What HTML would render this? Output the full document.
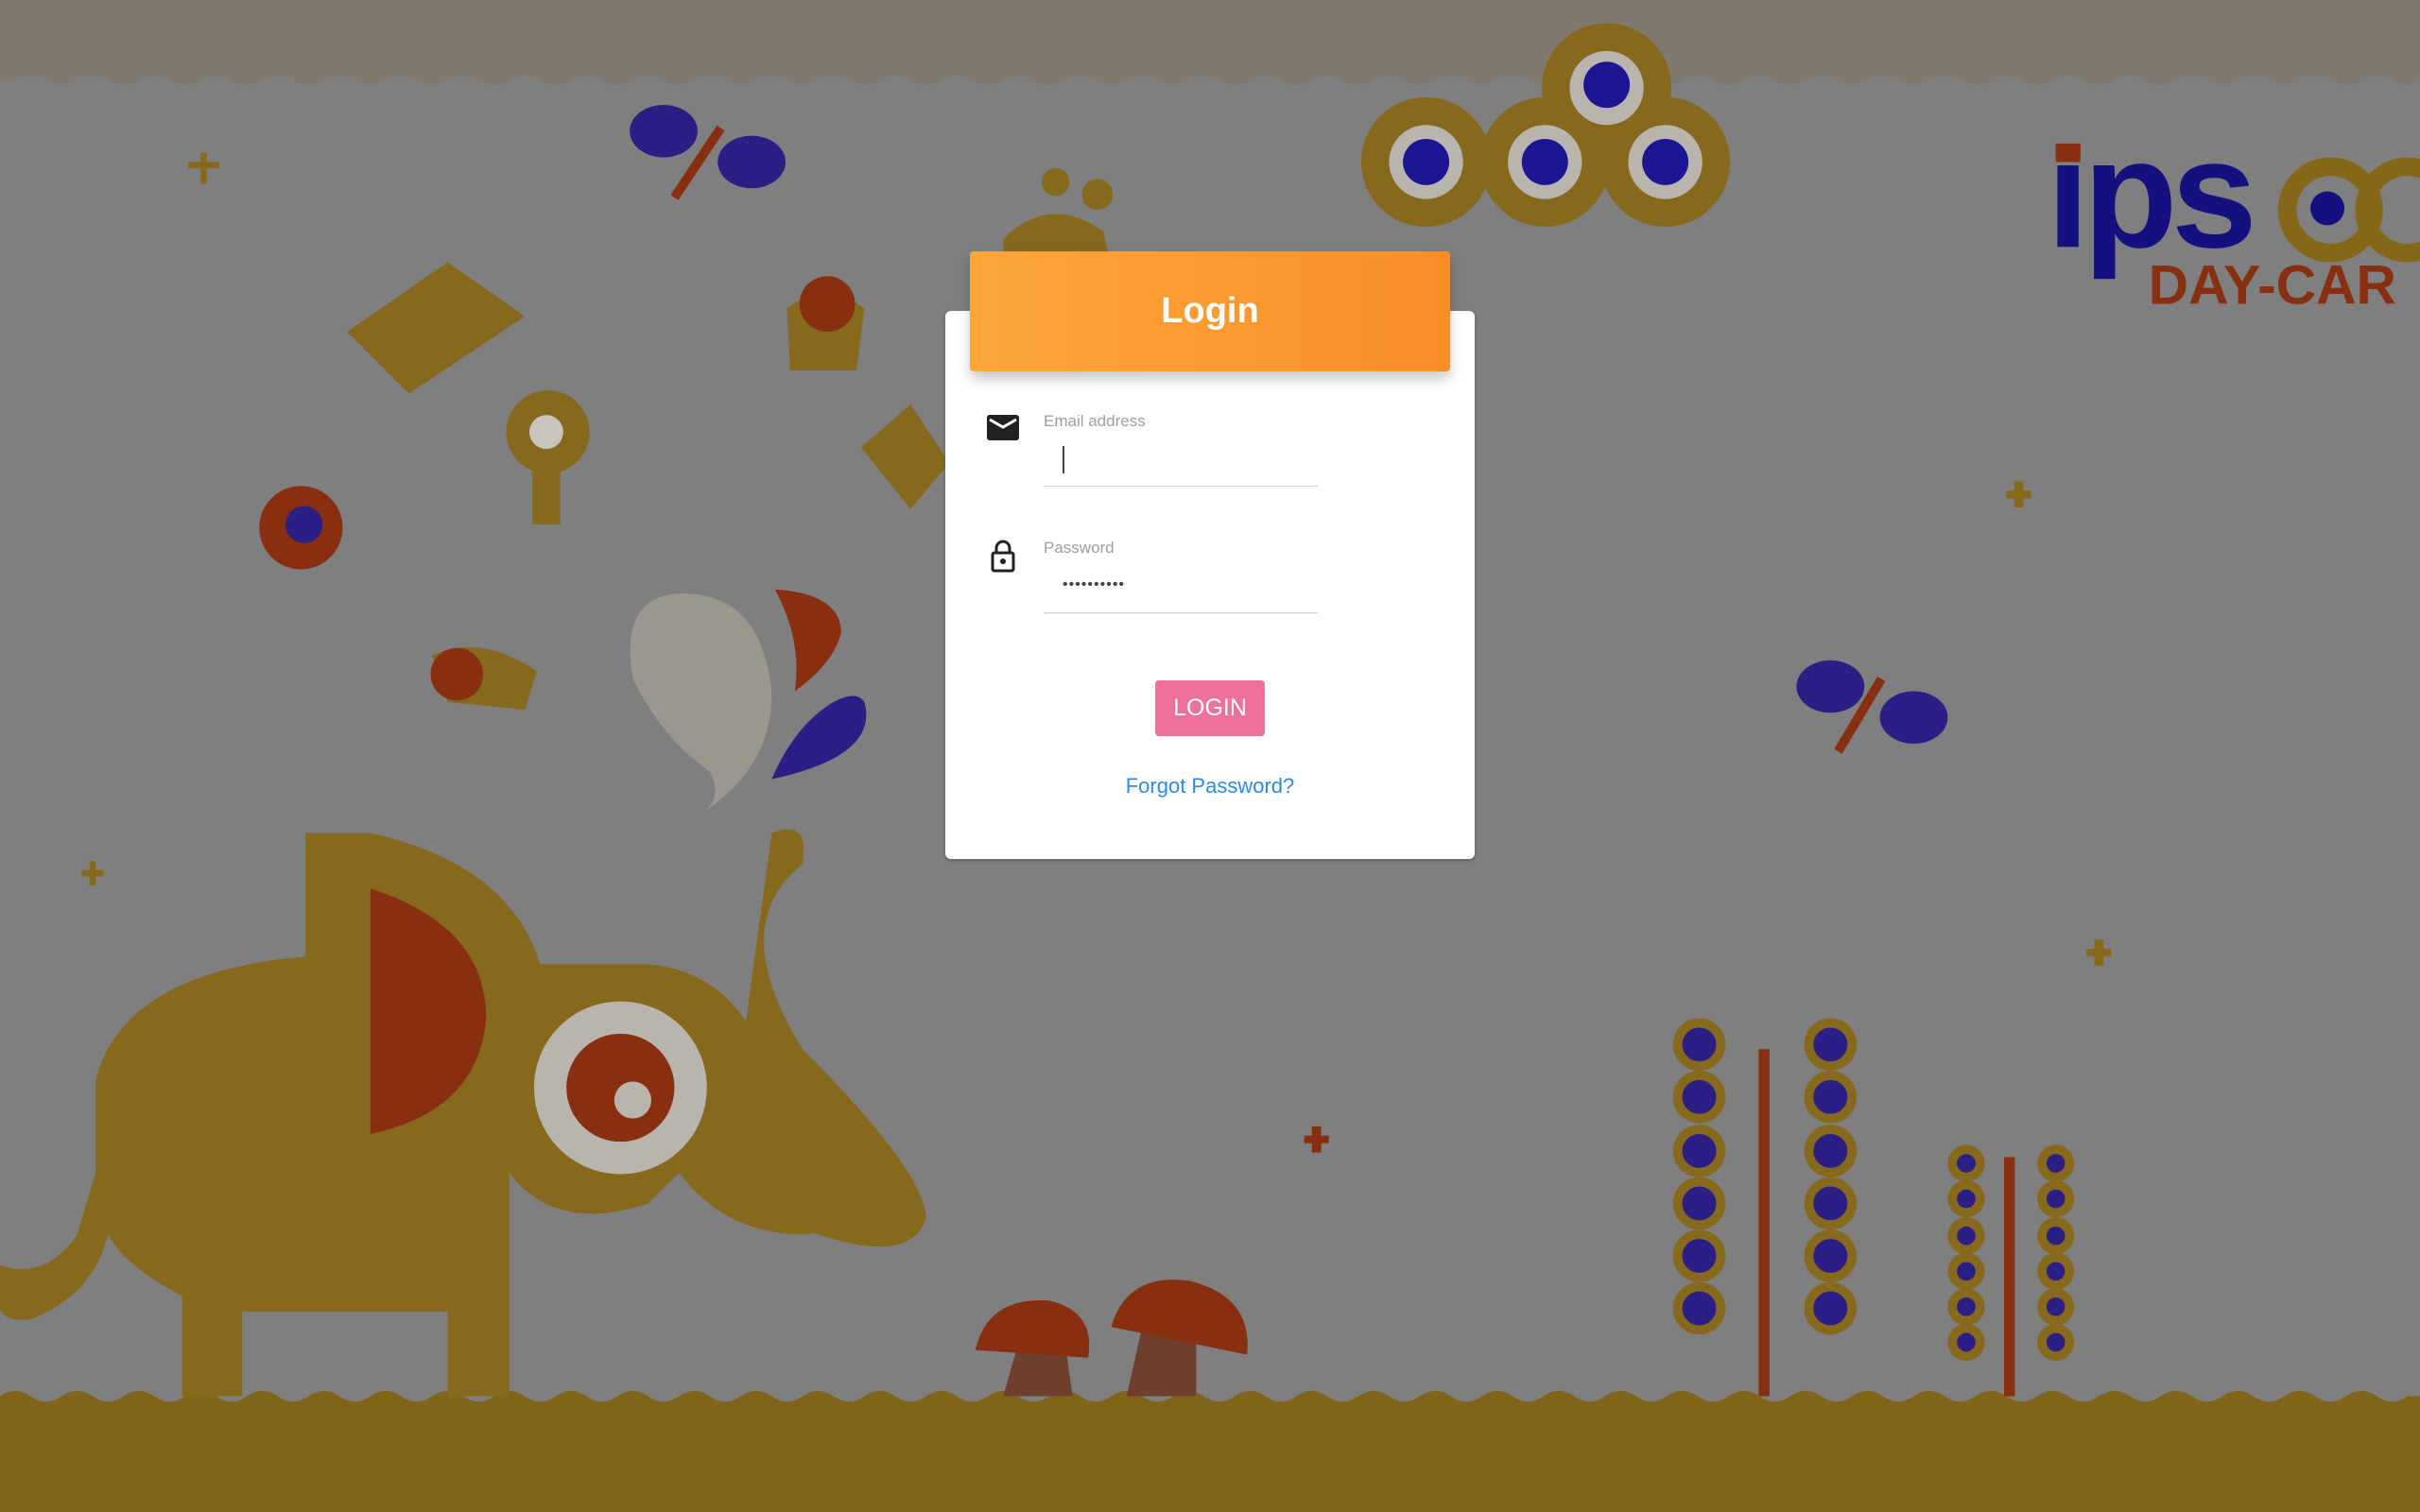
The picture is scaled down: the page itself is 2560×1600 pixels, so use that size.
<!DOCTYPE html>
<html><head><meta charset="utf-8"><style>
html,body{margin:0;padding:0;width:2560px;height:1600px;overflow:hidden;background:#7f7f7f;font-family:"Liberation Sans",sans-serif}
svg.bg{position:absolute;left:0;top:0;width:2560px;height:1600px}
.card{position:absolute;left:1000px;top:329px;width:560px;height:580px;background:#fff;border-radius:6px;box-shadow:0 2px 4px rgba(0,0,0,.25)}
.head{position:absolute;left:1026px;top:266px;width:508px;height:127px;border-radius:4px;background:linear-gradient(90deg,#fda63a,#f98e28);box-shadow:0 8px 14px rgba(0,0,0,.22);color:#fff;font-weight:bold;font-size:38px;text-align:center;line-height:127px}
.lbl{position:absolute;left:1104px;font-size:17px;color:#9e9e9e;line-height:20px}
.line{position:absolute;left:1104px;width:290px;height:1px;background:#cfcfcf}
.btn{position:absolute;left:1222px;top:720px;width:116px;height:59px;background:#ee7199;border-radius:4px;color:#fff;font-size:25px;text-align:center;line-height:59px}
.fp{position:absolute;left:1000px;width:560px;top:818px;line-height:28px;text-align:center;font-size:22px;color:#2a8ae6}
</style></head><body>
<svg class="bg" viewBox="0 0 1568 980" preserveAspectRatio="none">
<rect width="1568" height="980" fill="#7f7f7f"/>
<path d="M0 0H1568V52Q1560 58 1550 52T1530 52T1510 52T1490 52T1470 52T1450 52T1430 52T1410 52T1390 52T1370 52T1350 52T1330 52T1310 52T1290 52T1270 52T1250 52T1230 52T1210 52T1190 52T1170 52T1150 52T1130 52T1110 52T1090 52T1070 52T1050 52T1030 52T1010 52T990 52T970 52T950 52T930 52T910 52T890 52T870 52T850 52T830 52T810 52T790 52T770 52T750 52T730 52T710 52T690 52T670 52T650 52T630 52T610 52T590 52T570 52T550 52T530 52T510 52T490 52T470 52T450 52T430 52T410 52T390 52T370 52T350 52T330 52T310 52T290 52T270 52T250 52T230 52T210 52T190 52T170 52T150 52T130 52T110 52T90 52T70 52T50 52T30 52T10 52L0 52Z" fill="#817970"/>
<path d="M0 905Q10 898 20 905T40 905T60 905T80 905T100 905T120 905T140 905T160 905T180 905T200 905T220 905T240 905T260 905T280 905T300 905T320 905T340 905T360 905T380 905T400 905T420 905T440 905T460 905T480 905T500 905T520 905T540 905T560 905T580 905T600 905T620 905T640 905T660 905T680 905T700 905T720 905T740 905T760 905T780 905T800 905T820 905T840 905T860 905T880 905T900 905T920 905T940 905T960 905T980 905T1000 905T1020 905T1040 905T1060 905T1080 905T1100 905T1120 905T1140 905T1160 905T1180 905T1200 905T1220 905T1240 905T1260 905T1280 905T1300 905T1320 905T1340 905T1360 905T1380 905T1400 905T1420 905T1440 905T1460 905T1480 905T1500 905T1520 905T1540 905T1560 905L1568 905V980H0Z" fill="#80641a"/>
<g fill="#86691c">
<path d="M198 540H240Q330 560 350 625H420Q480 630 500 700L530 760Q560 800 520 800Q470 800 440 760L420 780Q360 800 330 760V905H290V850H157V905H118V840Q80 820 70 800Q60 840 20 855Q-10 860 0 820Q30 830 50 800L62 760V700Q80 630 198 620Z"/>
<path d="M500 540Q525 530 520 560Q470 600 520 680Q600 760 600 790Q590 820 530 800L470 760Z"/>
</g>
<path d="M240 576Q315 600 315 660Q310 720 240 735Z" fill="#872f10"/>
<circle cx="402" cy="705" r="56" fill="#b9b5ae"/><circle cx="402" cy="705" r="35" fill="#872f10"/><circle cx="410" cy="713" r="12" fill="#b9b5ae"/>
<path d="M450 385Q400 380 410 440Q430 480 460 500Q470 520 450 530Q500 500 500 450Q495 390 450 385Z" fill="#9b968e"/>
<path d="M502 382Q545 385 545 410Q540 430 515 448Q520 415 502 382Z" fill="#872f10"/>
<path d="M560 455Q570 490 500 505Q515 470 540 455Q555 447 560 455Z" fill="#2b1f86"/>
<g fill="#86691c"><circle cx="1041" cy="57" r="42"/><circle cx="924" cy="105" r="42"/><circle cx="1001" cy="105" r="42"/><circle cx="1079" cy="105" r="42"/></g>
<g fill="#b9b5ae"><circle cx="1041" cy="57" r="24"/><circle cx="924" cy="105" r="24"/><circle cx="1001" cy="105" r="24"/><circle cx="1079" cy="105" r="24"/></g>
<g fill="#1e1593"><circle cx="1041" cy="55" r="15"/><circle cx="924" cy="105" r="15"/><circle cx="1001" cy="105" r="15"/><circle cx="1079" cy="105" r="15"/></g>
<path d="M650 155Q680 125 715 150L718 165H650Z" fill="#86691c"/><circle cx="684" cy="118" r="9" fill="#86691c"/><circle cx="711" cy="126" r="10" fill="#86691c"/>
<g fill="#2b1f86"><ellipse cx="430" cy="85" rx="22" ry="17"/><ellipse cx="487" cy="105" rx="22" ry="17"/><ellipse cx="1186" cy="445" rx="22" ry="17"/><ellipse cx="1240" cy="465" rx="22" ry="17"/></g>
<path d="M437 128L467 83M1191 487L1219 440" stroke="#872f10" stroke-width="6"/>
<path d="M225 215L290 170L340 205L265 255Z" fill="#86691c"/>
<path d="M510 200Q535 180 560 200L555 240L512 240Z" fill="#86691c"/><circle cx="536" cy="197" r="18" fill="#872f10"/>
<path d="M280 425Q310 410 348 435L340 460L290 455Z" fill="#86691c"/><circle cx="296" cy="437" r="17" fill="#872f10"/>
<circle cx="355" cy="280" r="27" fill="#86691c"/><circle cx="354" cy="280" r="11" fill="#c9c4bc"/><rect x="345" y="300" width="18" height="40" fill="#86691c"/>
<circle cx="195" cy="342" r="27" fill="#872f10"/><circle cx="197" cy="340" r="12" fill="#2b1f86"/>
<path d="M558 290L590 262L615 300L590 330Z" fill="#86691c"/>
<path d="M1143 905V680M1302 905V750" stroke="#872f10" stroke-width="7"/>
<g fill="#2b1f86" stroke="#86691c" stroke-width="6">
<circle cx="1101" cy="677" r="14"/><circle cx="1186" cy="677" r="14"/><circle cx="1101" cy="711" r="14"/><circle cx="1186" cy="711" r="14"/><circle cx="1101" cy="746" r="14"/><circle cx="1186" cy="746" r="14"/><circle cx="1101" cy="780" r="14"/><circle cx="1186" cy="780" r="14"/><circle cx="1101" cy="814" r="14"/><circle cx="1186" cy="814" r="14"/><circle cx="1101" cy="848" r="14"/><circle cx="1186" cy="848" r="14"/>
<circle cx="1274" cy="754" r="9"/><circle cx="1332" cy="754" r="9"/><circle cx="1274" cy="777" r="9"/><circle cx="1332" cy="777" r="9"/><circle cx="1274" cy="801" r="9"/><circle cx="1332" cy="801" r="9"/><circle cx="1274" cy="824" r="9"/><circle cx="1332" cy="824" r="9"/><circle cx="1274" cy="847" r="9"/><circle cx="1332" cy="847" r="9"/><circle cx="1274" cy="870" r="9"/><circle cx="1332" cy="870" r="9"/>
</g>
<path d="M660 870L650 905H695L690 870ZM740 860L730 905H775L775 860Z" fill="#6e3f2e"/>
<path d="M632 875Q640 840 680 843Q710 850 705 880Z" fill="#872f10"/>
<path d="M720 860Q730 825 770 830Q812 840 808 878Z" fill="#872f10"/>
<g fill="#86691c"><path d="M122 105h20v4h-20zM130 99h4v20h-4z"/><path d="M1300 318h16v5h-16zM1305 312h6v17h-6z"/><path d="M1352 615h16v5h-16zM1357 609h6v17h-6z"/><path d="M53 564h14v4h-14zM58 558h4v16h-4z"/></g>
<path d="M845 736h16v5h-16zM850 730h6v17h-6z" fill="#872f10"/>
<rect x="1332" y="93" width="16" height="12" fill="#872f10"/>
<text x="1326" y="160" font-family="Liberation Sans,sans-serif" font-weight="bold" font-size="100" fill="#15107f" letter-spacing="-4">ıps</text>
<text x="1392" y="197" font-family="Liberation Sans,sans-serif" font-weight="bold" font-size="36" fill="#872f10">DAY-CAR</text>
<circle cx="1510" cy="136" r="28" fill="none" stroke="#846818" stroke-width="12"/><circle cx="1508" cy="135" r="11" fill="#15107f"/>
<circle cx="1560" cy="136" r="28" fill="none" stroke="#846818" stroke-width="12"/>
</svg>
<div class="card"></div>
<div class="head">Login</div>
<svg style="position:absolute;left:1044px;top:439px" width="34" height="28" viewBox="0 0 34 28"><rect x="0" y="0" width="34" height="27" rx="3" fill="#212121"/><path d="M3 5L17 13L31 5" stroke="#fff" stroke-width="3" fill="none"/></svg>
<svg style="position:absolute;left:1046px;top:570px" width="30" height="36" viewBox="0 0 30 36"><path d="M8 15V10a7 7 0 0 1 14 0v5" stroke="#212121" stroke-width="3" fill="none"/><rect x="4" y="15" width="22" height="19" rx="2" stroke="#212121" stroke-width="3" fill="none"/><circle cx="15" cy="24" r="3" fill="#212121"/></svg>
<div class="lbl" style="top:436px">Email address</div>
<div style="position:absolute;left:1124px;top:472px;width:2px;height:29px;background:#444"></div>
<div class="line" style="top:514px"></div>
<div class="lbl" style="top:570px">Password</div>
<div style="position:absolute;left:1124px;top:609px;font-size:16px;line-height:20px;color:#444;letter-spacing:1px">••••••••••</div>
<div class="line" style="top:648px"></div>
<div class="btn">LOGIN</div>
<div class="fp">Forgot Password?</div>
</body></html>
